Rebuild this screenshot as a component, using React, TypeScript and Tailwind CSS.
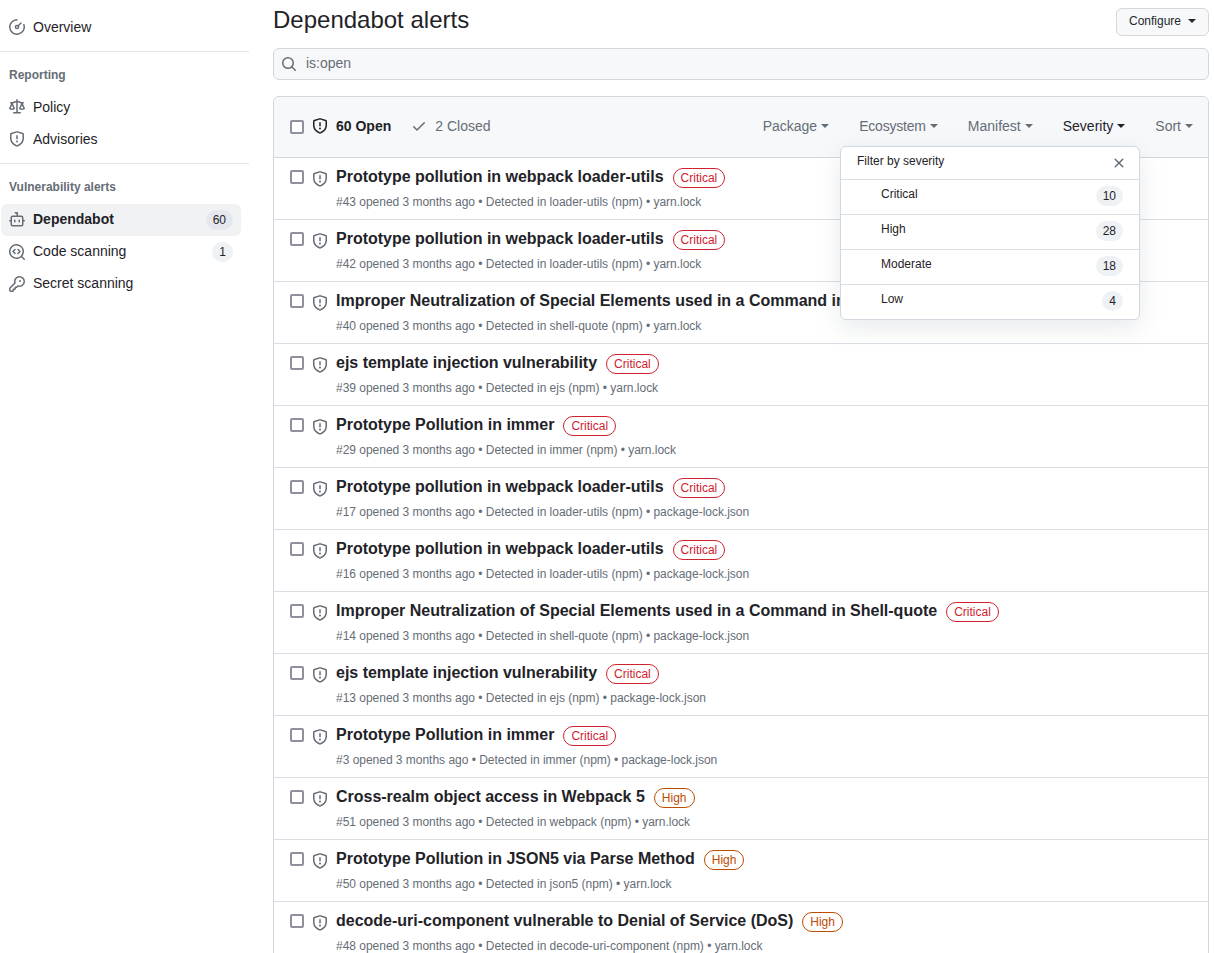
const SHIELD =
  'M7.467.133a1.748 1.748 0 0 1 1.066 0l5.25 1.68A1.75 1.75 0 0 1 15 3.48V7c0 1.566-.32 3.182-1.303 4.682-.983 1.498-2.585 2.813-5.032 3.855a1.697 1.697 0 0 1-1.33 0c-2.447-1.042-4.049-2.357-5.032-3.855C1.32 10.182 1 8.566 1 7V3.48a1.75 1.75 0 0 1 1.217-1.667Zm.61 1.429a.25.25 0 0 0-.153 0l-5.25 1.68a.25.25 0 0 0-.174.238V7c0 1.358.275 2.666 1.057 3.86.784 1.194 2.121 2.34 4.366 3.297a.196.196 0 0 0 .154 0c2.245-.956 3.582-2.104 4.366-3.298C13.225 9.666 13.5 8.36 13.5 7V3.48a.251.251 0 0 0-.174-.237l-5.25-1.68ZM8.75 4.75v3a.75.75 0 0 1-1.5 0v-3a.75.75 0 0 1 1.5 0ZM9 10.5a1 1 0 1 1-2 0 1 1 0 0 1 2 0Z';
const LAW =
  'M8.75.75V2h.985c.304 0 .603.08.867.231l1.29.736c.038.022.08.033.124.033h2.234a.75.75 0 0 1 0 1.5h-.427l2.111 4.692a.75.75 0 0 1-.154.838l-.53-.53.529.531-.001.002-.002.002-.006.006-.006.005-.01.01-.045.04c-.21.176-.441.327-.686.45C14.556 10.78 13.88 11 13 11a4.498 4.498 0 0 1-2.023-.454 3.544 3.544 0 0 1-.686-.45l-.045-.04-.016-.015-.006-.006-.004-.004v-.001a.75.75 0 0 1-.154-.838L12.178 4.5h-.162c-.305 0-.604-.079-.868-.231l-1.29-.736a.245.245 0 0 0-.124-.033H8.75V13h2.5a.75.75 0 0 1 0 1.5h-6.5a.75.75 0 0 1 0-1.5h2.5V3.5h-.984a.245.245 0 0 0-.124.033l-1.289.737c-.265.15-.564.23-.869.23h-.162l2.112 4.692a.75.75 0 0 1-.154.838l-.53-.53.529.531-.001.002-.002.002-.006.006-.016.015-.045.04c-.21.176-.441.327-.686.45C4.556 10.78 3.88 11 3 11a4.498 4.498 0 0 1-2.023-.454 3.544 3.544 0 0 1-.686-.45l-.045-.04-.016-.015-.006-.006-.004-.004v-.001a.75.75 0 0 1-.154-.838L2.178 4.5H1.75a.75.75 0 0 1 0-1.5h2.234a.249.249 0 0 0 .125-.033l1.288-.737c.265-.15.564-.23.869-.23h.984V.75a.75.75 0 0 1 1.5 0Zm2.945 8.477c.285.135.718.273 1.305.273s1.02-.138 1.305-.273L13 6.327Zm-10 0c.285.135.718.273 1.305.273s1.02-.138 1.305-.273L3 6.327Z';
const BOT =
  'M5.75 7.5a.75.75 0 0 1 .75.75v1.5a.75.75 0 0 1-1.5 0v-1.5a.75.75 0 0 1 .75-.75Zm5.25.75a.75.75 0 0 0-1.5 0v1.5a.75.75 0 0 0 1.5 0v-1.5ZM6.25 0h2A.75.75 0 0 1 9 .75V3.5h3.25a2.25 2.25 0 0 1 2.25 2.25V8h.75a.75.75 0 0 1 0 1.5h-.75v2.75a2.25 2.25 0 0 1-2.25 2.25h-8.5a2.25 2.25 0 0 1-2.25-2.25V9.5H.75a.75.75 0 0 1 0-1.5H1.5V5.75A2.25 2.25 0 0 1 3.75 3.5H7.5v-2H6.25a.75.75 0 0 1 0-1.5ZM3 5.75v6.5c0 .414.336.75.75.75h8.5a.75.75 0 0 0 .75-.75v-6.5a.75.75 0 0 0-.75-.75h-8.5a.75.75 0 0 0-.75.75Z';
const CODESCAN =
  'M8.47 4.97a.75.75 0 0 0 0 1.06L9.94 7.5 8.47 8.97a.75.75 0 1 0 1.06 1.06l2-2a.75.75 0 0 0 0-1.06l-2-2a.75.75 0 0 0-1.06 0ZM6.53 6.03a.75.75 0 0 0-1.06-1.06l-2 2a.75.75 0 0 0 0 1.06l2 2a.75.75 0 1 0 1.06-1.06L5.06 7.5l1.47-1.47ZM12.246 13.307a7.501 7.501 0 1 1 1.06-1.06l2.474 2.473a.749.749 0 0 1-.326 1.275.749.749 0 0 1-.734-.215ZM1.5 7.5a6.002 6.002 0 0 0 3.608 5.504 6.002 6.002 0 0 0 6.486-1.117.748.748 0 0 1 .292-.293A6 6 0 1 0 1.5 7.5Z';
const KEY =
  'M10.5 0a5.499 5.499 0 1 1-1.288 10.848l-.932.932a.749.749 0 0 1-.53.22H7v.75a.749.749 0 0 1-.22.53l-.5.5a.749.749 0 0 1-.53.22H5v.75a.749.749 0 0 1-.22.53l-.5.5a.749.749 0 0 1-.53.22h-2A1.75 1.75 0 0 1 0 14.25v-2c0-.199.079-.389.22-.53l4.932-4.932A5.5 5.5 0 0 1 10.5 0Zm-4 5.5c-.001.431.069.86.205 1.269a.75.75 0 0 1-.181.768L1.5 12.56v1.69c0 .138.112.25.25.25h1.69l.06-.06v-1.19a.75.75 0 0 1 .75-.75h1.19l.06-.06v-1.19a.75.75 0 0 1 .75-.75h1.19l1.023-1.025a.75.75 0 0 1 .768-.18A4 4 0 1 0 6.5 5.5ZM11 6a1 1 0 1 1 0-2 1 1 0 0 1 0 2Z';
const CHECK =
  'M13.78 4.22a.75.75 0 0 1 0 1.06l-7.25 7.25a.75.75 0 0 1-1.06 0L2.22 9.28a.751.751 0 0 1 .018-1.042.751.751 0 0 1 1.042-.018L6 10.94l6.72-6.72a.75.75 0 0 1 1.06 0Z';
const CLOSE =
  'M3.72 3.72a.75.75 0 0 1 1.06 0L8 6.94l3.22-3.22a.749.749 0 0 1 1.275.326.749.749 0 0 1-.215.734L9.06 8l3.22 3.22a.749.749 0 0 1-.326 1.275.749.749 0 0 1-.734-.215L8 9.06l-3.22 3.22a.751.751 0 0 1-1.042-.018.751.751 0 0 1-.018-1.042L6.94 8 3.72 4.78a.75.75 0 0 1 0-1.06Z';
const SEARCH =
  'M10.68 11.74a6 6 0 0 1-7.922-8.982 6 6 0 0 1 8.982 7.922l3.04 3.04a.749.749 0 0 1-.326 1.275.749.749 0 0 1-.734-.215ZM11.5 7a4.499 4.499 0 1 0-8.997 0A4.499 4.499 0 0 0 11.5 7Z';

function Octicon({ d, className }: { d: string; className?: string }) {
  return (
    <svg viewBox="0 0 16 16" width="16" height="16" fill="currentColor" className={className}>
      <path d={d} />
    </svg>
  );
}

function MeterIcon() {
  return (
    <svg viewBox="0 0 16 16" width="16" height="16" fill="none" stroke="currentColor" strokeWidth="1.5" strokeLinecap="round" className="shrink-0 text-[#656d76]">
      <path d="M8 .75A7.25 7.25 0 1 0 14.9 5.8" />
      <circle cx="8" cy="8" r="1.6" />
      <path d="M9.2 6.8 12 4" />
    </svg>
  );
}

function Caret() {
  return <span className="inline-block w-0 h-0 border-x-4 border-t-4 border-x-transparent border-t-current" />;
}

function Counter({ children, className }: { children: React.ReactNode; className?: string }) {
  return (
    <span className={`inline-block min-w-5 h-5 px-1.5 border border-transparent rounded-full text-xs font-normal leading-[18px] text-center text-[#1f2328] ${className ?? 'bg-[#eff2f5]'}`}>
      {children}
    </span>
  );
}

function NavItem({ icon, label, count, active, raised }: { icon: React.ReactNode; label: string; count?: string; active?: boolean; raised?: boolean }) {
  return (
    <a className={`flex items-center h-8 ml-px w-[240px] pl-2 pr-2 rounded-md text-sm text-[#1f2328] ${active ? 'bg-[#f1f2f4] font-bold' : ''}`}>
      <span className="w-4 mr-2 flex text-[#656d76]">{icon}</span>
      <span className={`flex-1 ${raised ? 'pb-[3px]' : 'pb-px'}`}>{label}</span>
      {count && <Counter className={active ? 'bg-[#e4e8ee]' : undefined}>{count}</Counter>}
    </a>
  );
}

function Sidebar() {
  return (
    <aside className="w-[249px] shrink-0 pt-[11px]">
      <NavItem icon={<MeterIcon />} label="Overview" />
      <div className="h-px bg-[#e4e7ea] my-2" />
      <h3 className="pl-[9px] h-[31px] pb-[1px] flex items-center text-xs font-bold text-[#656d76]">Reporting</h3>
      <NavItem icon={<Octicon d={LAW} />} label="Policy" />
      <NavItem icon={<Octicon d={SHIELD} />} label="Advisories" />
      <div className="h-px bg-[#e4e7ea] my-2" />
      <h3 className="pl-[9px] h-8 pb-[2px] flex items-center text-xs font-bold text-[#656d76]">Vulnerability alerts</h3>
      <NavItem icon={<Octicon d={BOT} />} label="Dependabot" count="60" active raised />
      <NavItem icon={<Octicon d={CODESCAN} />} label="Code scanning" count="1" raised />
      <NavItem icon={<Octicon d={KEY} />} label="Secret scanning" raised />
    </aside>
  );
}

type Alert = { title: string; num: string; pkg: string; file: string; sev: 'Critical' | 'High' };

const YARN = 'yarn.lock';
const LOCK = 'package-lock.json';

const alerts: Alert[] = [
  { title: 'Prototype pollution in webpack loader-utils', num: '43', pkg: 'loader-utils', file: YARN, sev: 'Critical' },
  { title: 'Prototype pollution in webpack loader-utils', num: '42', pkg: 'loader-utils', file: YARN, sev: 'Critical' },
  { title: 'Improper Neutralization of Special Elements used in a Command in Shell-quote', num: '40', pkg: 'shell-quote', file: YARN, sev: 'Critical' },
  { title: 'ejs template injection vulnerability', num: '39', pkg: 'ejs', file: YARN, sev: 'Critical' },
  { title: 'Prototype Pollution in immer', num: '29', pkg: 'immer', file: YARN, sev: 'Critical' },
  { title: 'Prototype pollution in webpack loader-utils', num: '17', pkg: 'loader-utils', file: LOCK, sev: 'Critical' },
  { title: 'Prototype pollution in webpack loader-utils', num: '16', pkg: 'loader-utils', file: LOCK, sev: 'Critical' },
  { title: 'Improper Neutralization of Special Elements used in a Command in Shell-quote', num: '14', pkg: 'shell-quote', file: LOCK, sev: 'Critical' },
  { title: 'ejs template injection vulnerability', num: '13', pkg: 'ejs', file: LOCK, sev: 'Critical' },
  { title: 'Prototype Pollution in immer', num: '3', pkg: 'immer', file: LOCK, sev: 'Critical' },
  { title: 'Cross-realm object access in Webpack 5', num: '51', pkg: 'webpack', file: YARN, sev: 'High' },
  { title: 'Prototype Pollution in JSON5 via Parse Method', num: '50', pkg: 'json5', file: YARN, sev: 'High' },
  { title: 'decode-uri-component vulnerable to Denial of Service (DoS)', num: '48', pkg: 'decode-uri-component', file: YARN, sev: 'High' },
];

function Checkbox({ className }: { className?: string }) {
  return (
    <input
      type="checkbox"
      readOnly
      className={`appearance-none w-3.5 h-3.5 shrink-0 bg-white border-2 border-[#8f8f9d] rounded-[2px] ${className ?? ''}`}
    />
  );
}

function AlertRow({ alert }: { alert: Alert }) {
  const label =
    alert.sev === 'Critical' ? 'border-[#cf222e] text-[#cf222e]' : 'border-[#bc4c00] text-[#bc4c00]';
  return (
    <li className="h-[62px] flex border-b border-[#d8dee4]">
      <div className="w-[62px] pl-4 flex items-start shrink-0">
        <Checkbox className="mt-3" />
        <Octicon d={SHIELD} className="ml-2 mt-[13px] text-[#656d76] shrink-0" />
      </div>
      <div className="pt-[8px] min-w-0">
        <div className="flex items-center h-[21px]">
          <span className="text-base font-bold leading-[21px] text-[#1f2328] whitespace-nowrap tracking-[-0.01px]">{alert.title}</span>
          <span className={`ml-[9px] mt-0.5 h-5 px-[7px] border rounded-full text-xs leading-[18px] ${label}`}>{alert.sev}</span>
        </div>
        <div className="mt-[6px] text-xs leading-[18px] text-[#656d76] whitespace-nowrap tracking-[-0.02px]">
          #{alert.num} opened 3 months ago • Detected in {alert.pkg} (npm) • {alert.file}
        </div>
      </div>
    </li>
  );
}

function SeverityMenu() {
  const options = [
    { label: 'Critical', count: '10' },
    { label: 'High', count: '28' },
    { label: 'Moderate', count: '18' },
    { label: 'Low', count: '4' },
  ];
  return (
    <div className="absolute top-[49px] left-[566px] w-[300px] z-10 bg-white border border-[#d0d7de] rounded-md shadow-[0_8px_24px_rgba(140,149,159,0.2)] text-xs text-[#1f2328]">
      <div className="h-[32px] pl-4 pr-3 flex justify-between">
        <span className="pt-[5px] leading-[18px]">Filter by severity</span>
        <Octicon d={CLOSE} className="mt-2 text-[#656d76]" />
      </div>
      {options.map((o) => (
        <div key={o.label} className="h-[35px] border-t border-[#d8dee4] pl-10 pr-4 flex justify-between">
          <span className="pt-[5px] leading-[18px]">{o.label}</span>
          <Counter className="mt-[6px] bg-[#eff2f5]">{o.count}</Counter>
        </div>
      ))}
    </div>
  );
}

function Filter({ label, active, className }: { label: string; active?: boolean; className?: string }) {
  return (
    <span className={`flex items-center gap-1 ${active ? 'text-[#1f2328]' : 'text-[#656d76]'} ${className ?? ''}`}>
      {label}
      <Caret />
    </span>
  );
}

export default function App() {
  return (
    <div className="h-[953px] overflow-hidden flex bg-white text-sm text-[#1f2328] font-['Liberation_Sans',Arial,sans-serif]">
      <Sidebar />
      <main className="ml-6 w-[936px] pt-2">
        <div className="flex justify-between items-start h-10">
          <h1 className="text-2xl leading-6 text-[#1f2328]">Dependabot alerts</h1>
          <button className="h-7 pl-3 pr-3 pb-[3px] flex items-center gap-[7px] border border-[#d5d8da] rounded-md bg-[#f6f8fa] text-xs text-[#24292f]">
            Configure
            <Caret />
          </button>
        </div>
        <div className="h-8 flex items-center border border-[#d0d7de] rounded-md bg-[#f6f8fa] pl-[7px] text-[#656d76]">
          <Octicon d={SEARCH} className="text-[#656d76]" />
          <span className="ml-[9px] mb-[3px]">is:open</span>
        </div>
        <section className="relative mt-4 border border-[#d0d7de] rounded-md">
          <header className="h-[61px] pb-[3px] flex items-center justify-between bg-[#f6f8fa] border-b border-[#d0d7de] rounded-t-md pl-4 pr-[15px]">
            <div className="flex items-center">
              <Checkbox className="mt-0.5" />
              <Octicon d={SHIELD} className="ml-2 mt-px text-[#1f2328]" />
              <b className="ml-2 font-bold">60 Open</b>
              <span className="ml-5 flex items-center text-[#656d76]">
                <Octicon d={CHECK} className="mt-px" />
                <span className="ml-2">2 Closed</span>
              </span>
            </div>
            <div className="flex items-center gap-[30px]">
              <Filter label="Package" />
              <Filter label="Ecosystem" className="tracking-[-0.2px]" />
              <Filter label="Manifest" />
              <Filter label="Severity" active />
              <Filter label="Sort" />
            </div>
          </header>
          <SeverityMenu />
          <ul>
            {alerts.map((a) => (
              <AlertRow key={a.num} alert={a} />
            ))}
          </ul>
        </section>
      </main>
    </div>
  );
}
